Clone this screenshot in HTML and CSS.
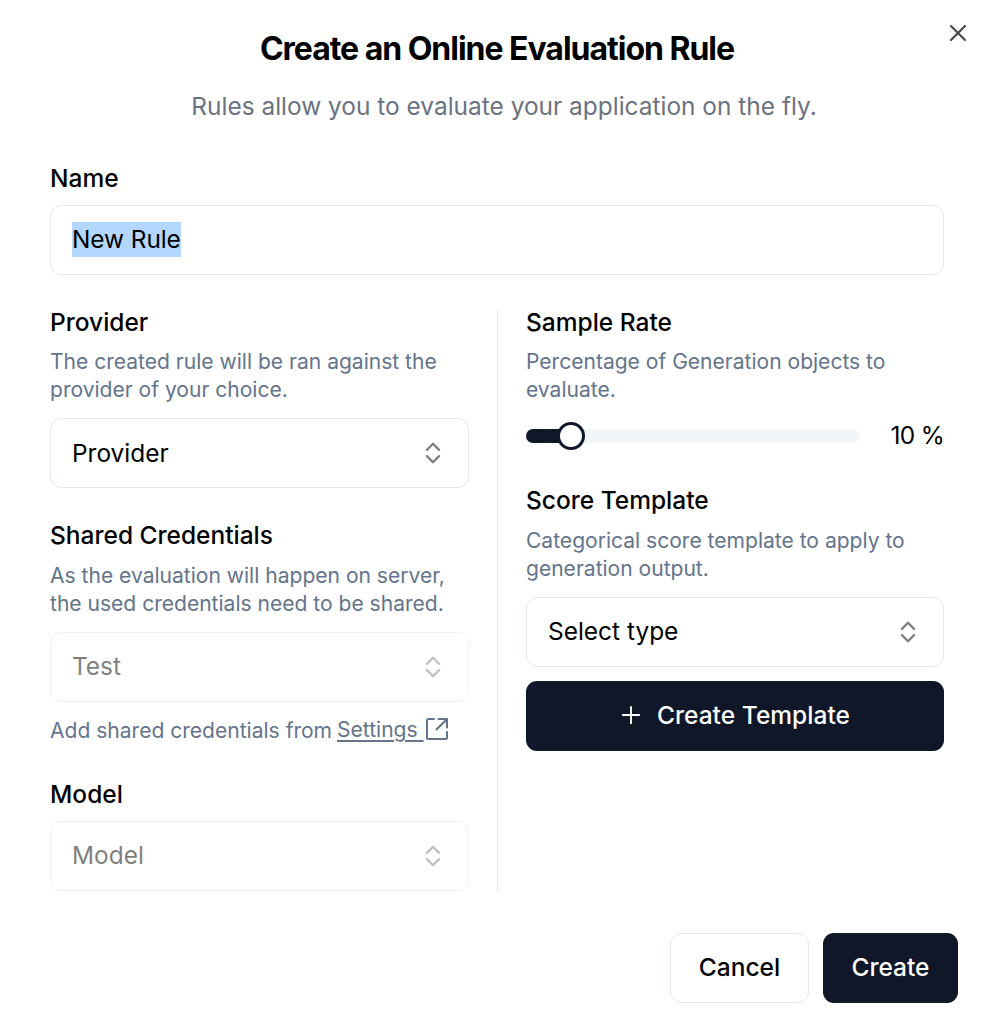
FILE: index.html
```html
<!DOCTYPE html>
<html lang="en">
<head>
<meta charset="utf-8">
<title>Create an Online Evaluation Rule</title>
<link rel="stylesheet" href="styles.css">
</head>
<body>
<main class="dialog">
  <button class="close" aria-label="Close"><svg width="28" height="28" viewBox="0 0 24 24"><path d="M18 6 6 18M6 6l12 12"/></svg></button>
  <header class="header">
    <h1 class="title"><span>Create an Online Evaluation Rule</span></h1>
    <p class="subtitle"><span>Rules allow you to evaluate your application on the fly.</span></p>
  </header>
  <section class="name-field">
    <label class="label">Name</label>
    <div class="control"><span class="selected">New Rule</span></div>
  </section>
  <div class="columns">
    <div class="col left">
      <section class="field provider">
        <h2 class="label">Provider</h2>
        <p class="hint">The created rule will be ran against the<br>provider of your choice.</p>
        <div class="control"><span>Provider</span><svg class="chev" viewBox="0 0 24 24"><path d="m6.800 14.700 5.200 5.200 5.200-5.200M6.800 9.300l5.200-5.200 5.200 5.200"/></svg></div>
      </section>
      <section class="field credentials">
        <h2 class="label">Shared Credentials</h2>
        <p class="hint">As the evaluation will happen on server,<br>the used credentials need to be shared.</p>
        <div class="control disabled"><span class="value">Test</span><svg class="chev" viewBox="0 0 24 24"><path d="m6.800 14.700 5.200 5.200 5.200-5.200M6.800 9.300l5.200-5.200 5.200 5.200"/></svg></div>
        <p class="settings"><span class="note">Add shared credentials from</span><a class="link">Settings&nbsp;</a><svg class="ext" viewBox="0 0 22 22"><path d="M8 1H2.500A1.500 1.500 0 0 0 1 2.500V19.500A1.500 1.500 0 0 0 2.500 21H19.500A1.500 1.500 0 0 0 21 19.500V14M12.500 1H21V9.500M21 1 10.500 11.500"/></svg></p>
      </section>
      <section class="field model">
        <h2 class="label">Model</h2>
        <div class="control disabled"><span class="value">Model</span><svg class="chev" viewBox="0 0 24 24"><path d="m6.800 14.700 5.200 5.200 5.200-5.200M6.800 9.300l5.200-5.200 5.200 5.200"/></svg></div>
      </section>
    </div>
    <div class="col right">
      <section class="field rate">
        <h2 class="label">Sample Rate</h2>
        <p class="hint">Percentage of Generation objects to<br>evaluate.</p>
        <div class="slider-row">
          <div class="track"><div class="range"></div><div class="thumb"></div></div>
          <span class="percent">10 %</span>
        </div>
      </section>
      <section class="field score">
        <h2 class="label">Score Template</h2>
        <p class="hint">Categorical score template to apply to<br>generation output.</p>
        <div class="control"><span class="value">Select type</span><svg class="chev" viewBox="0 0 24 24"><path d="m6.800 14.700 5.200 5.200 5.200-5.200M6.800 9.300l5.200-5.200 5.200 5.200"/></svg></div>
        <button class="btn primary wide"><svg class="plus" viewBox="0 0 24 24"><path d="M5 12h14M12 5v14"/></svg><span>Create Template</span></button>
      </section>
    </div>
  </div>
  <footer class="footer">
    <button class="btn outline"><span>Cancel</span></button>
    <button class="btn primary create"><span>Create</span></button>
  </footer>
</main>
</body>
</html>
```
FILE: styles.css
```css
* { box-sizing: border-box; }
body, h1, h2, p { margin: 0; }
body { background: #fff; color: #000; font-family: Inter, sans-serif; font-size: 24.45px; }
svg { flex: none; fill: none; stroke: currentColor; stroke-width: 2; stroke-linecap: round; stroke-linejoin: round; }
.dialog { position: relative; width: 986px; height: 1026px; padding: 28px 28px 0 50px; overflow: hidden; }
.close { position: absolute; top: 19px; right: 14px; width: 28px; height: 28px; padding: 0; border: 0; background: none; color: #4b4b4d; }
.close svg { display: block; stroke-width: 1.9; }
.header { width: 894px; text-align: center; }
.title { font-size: 32px; line-height: 42px; font-weight: 700; letter-spacing: -1.02px; white-space: nowrap; }
.subtitle { margin: 18px 0 0 14px; font-size: 24.45px; line-height: 36px; color: #6b7280; white-space: nowrap; }
.name-field { width: 894px; margin-top: 37px; }
.label { display: block; font-size: 24.5px; line-height: 35px; font-weight: 500; white-space: nowrap; }
.control { display: flex; align-items: center; justify-content: space-between; height: 70px; padding: 0 21px; border: 1px solid #e2e8f0; border-radius: 11px; white-space: nowrap; }
.name-field .control { margin-top: 9px; padding-bottom: 1px; }
.value { padding-bottom: 2px; }
.selected { height: 35px; line-height: 34px; background: #b3d7ff; letter-spacing: -.08px; }
.columns { display: flex; width: 894px; height: 581px; margin-top: 35px; }
.left { width: 448px; padding-right: 28px; border-right: 1px solid #e5e7eb; }
.right { width: 446px; padding-left: 28px; }
.hint, .settings { font-size: 21.05px; line-height: 28px; color: #64748b; white-space: nowrap; }
.hint { margin: 8px 0 14px; }
.field > .label { margin-top: -5px; }
.chev { width: 28px; height: 28px; color: #808080; }
.disabled { opacity: .5; }
.credentials { margin-top: 35px; }
.credentials .hint, .score .hint { margin-top: 9px; }
.settings { display: flex; height: 28px; margin-top: 14px; }
.note { padding-top: 1px; }
.link { text-decoration: underline; text-underline-offset: 3px; text-decoration-thickness: 2px; margin-left: 5px; }
.ext { width: 22px; height: 22px; margin: 2px 0 0 2px; overflow: visible; }
.model { margin-top: 38px; }
.model .control { margin-top: 9px; }
.slider-row { display: flex; align-items: center; height: 36px; justify-content: space-between; }
.track { position: relative; width: 334px; height: 14px; border-radius: 7px; background: #f1f5f9; }
.range { width: 45px; height: 14px; border-radius: 7px 0 0 7px; background: #101729; }
.thumb { position: absolute; left: 31px; top: -7px; width: 28px; height: 28px; border: 3px solid #101729; border-radius: 50%; background: #fff; }
.percent { line-height: 34px; padding-bottom: 2px; letter-spacing: -.7px; }
.score { margin-top: 34px; }
.btn { display: flex; align-items: center; justify-content: center; height: 70px; padding: 0 0 2px; border: 0; border-radius: 11px; font: 500 24.5px/35px Inter, sans-serif; white-space: nowrap; color: #000; background: #fff; }
.primary { background: #101729; color: #fff; }
.wide { width: 100%; margin-top: 14px; }
.plus { width: 28px; height: 28px; margin-right: 12px; stroke-width: 1.6; }
.wide span { margin-right: 3px; letter-spacing: .04px; }
.footer { display: flex; justify-content: flex-end; gap: 14px; margin-top: 42px; }
.outline { width: 139px; border: 1px solid #e2e8f0; }
.create { width: 135px; }
```
